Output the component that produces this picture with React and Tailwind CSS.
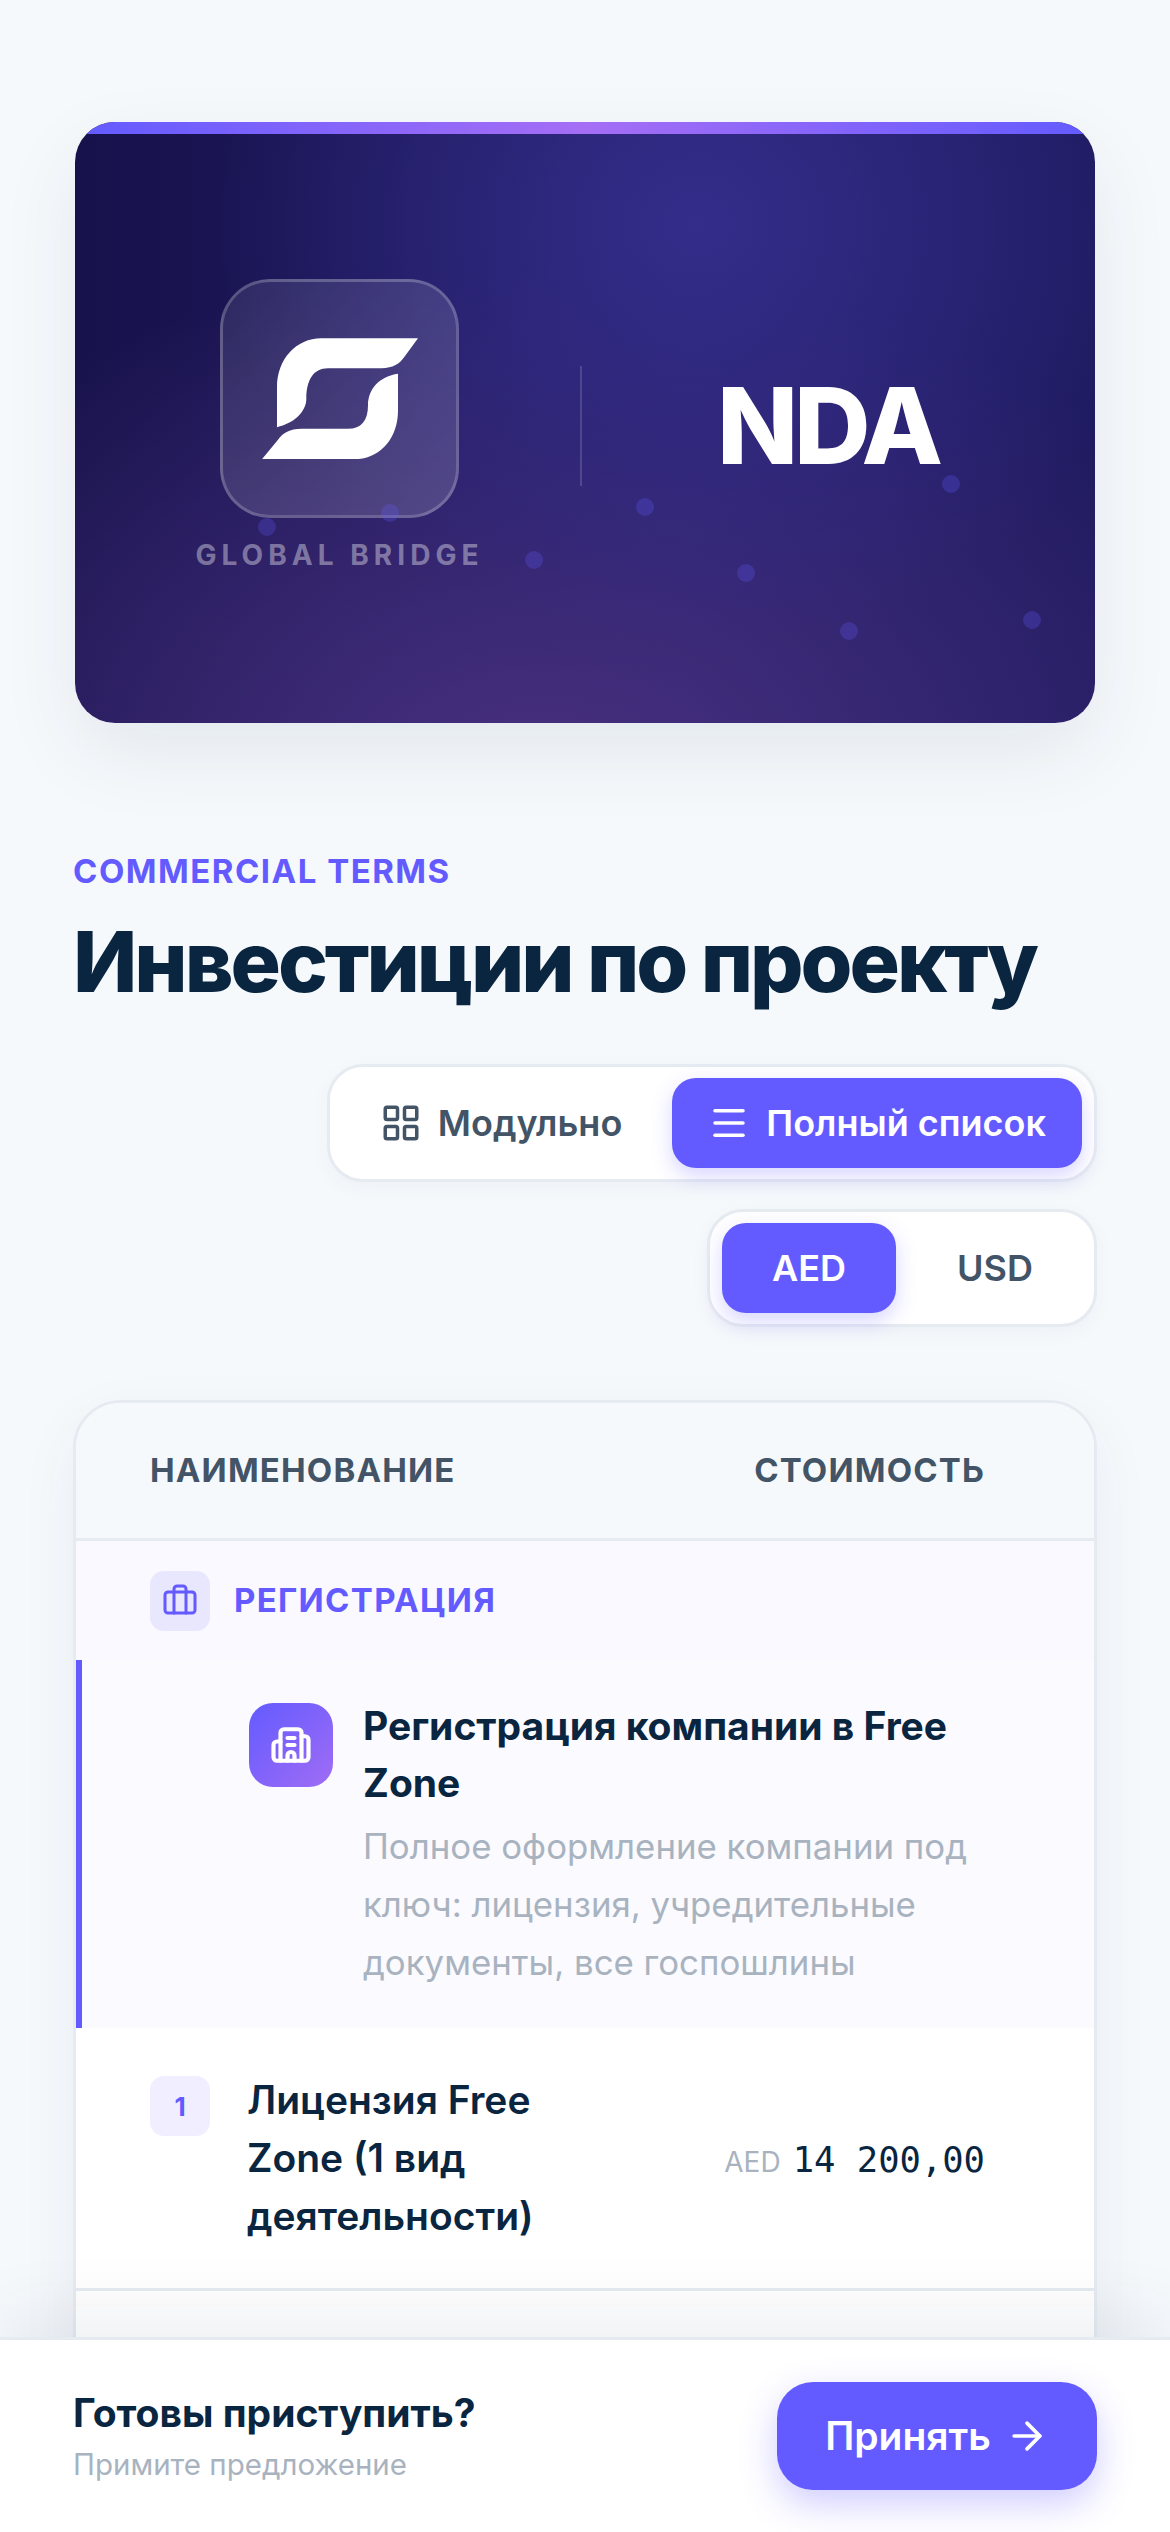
import React from "react";
import { LayoutGrid, Menu, ArrowRight, Briefcase, Building2 } from "lucide-react";

const dots = [
  "left-[183px] top-[396px]","left-[306px] top-[382px]","left-[450px] top-[429px]","left-[561px] top-[376px]",
  "left-[662px] top-[442px]","left-[765px] top-[500px]","left-[867px] top-[353px]","left-[948px] top-[489px]",
];

function Logo() {
  return (
    <svg viewBox="272 243 468 362" className="w-[156px] h-[121px]" fill="#fff">
      <path d="M740 243H450C375 243 317 305 317 390V510C365 500 405 465 405 425C405 370 425 333 470 333H630C665 333 685 320 700 298Z" />
      <path d="M680 350V460C680 545 625 606 550 606H272L320 548C335 527 355 515 390 515H530C570 515 590 490 590 445C590 395 625 358 680 350Z" />
    </svg>
  );
}

export default function App() {
  return (
    <div className="relative h-[2532px] overflow-hidden bg-[#f6f9fc] font-['Inter','Noto_Sans',sans-serif] text-[#0a2540]">
      <div className="px-[73px] pt-[122px]">
        <section className="relative h-[601px] mx-[2px] rounded-[40px] overflow-hidden shadow-[0_30px_80px_rgba(10,37,64,0.08)] bg-[radial-gradient(ellipse_480px_420px_at_61%_17%,#342d8a,transparent),radial-gradient(ellipse_800px_520px_at_45%_110%,#48307f,transparent),linear-gradient(90deg,#17124b,#231e69_60%,#1e1a5e)]">
          <div className="h-[12px] bg-[linear-gradient(90deg,#635bff,#a56ef5_50%,#635bff)]" />
          {dots.map((d) => (
            <span key={d} className={`absolute ${d} w-[18px] h-[18px] rounded-full bg-[#635bff]/25`} />
          ))}
          <div className="flex items-center pt-[145px]">
            <div className="flex flex-col items-center w-[505px] pl-[24px]">
              <div className="flex items-center justify-center w-[239px] h-[239px] rounded-[50px] border-[3px] border-white/20 bg-[linear-gradient(135deg,rgba(255,255,255,0.09),rgba(255,255,255,0.16))]">
                <Logo />
              </div>
              <div className="mt-[20px] text-[28px] leading-[34px] font-bold tracking-[0.18em] text-white/40">GLOBAL BRIDGE</div>
            </div>
            <div className="w-[2px] h-[120px] bg-white/15" />
            <div className="flex-1 pl-[135px] text-[106px] leading-[106px] font-extrabold tracking-[-0.04em] text-white">NDA</div>
          </div>
        </section>

        <div className="mt-[125px] text-[33px] leading-[46px] font-bold tracking-[0.045em] text-[#635bff]">COMMERCIAL TERMS</div>
        <h1 className="mt-[22px] text-[84px] leading-[92px] font-extrabold tracking-[-0.036em]">Инвестиции по проекту</h1>

        <div className="mt-[56px] flex flex-col items-end gap-[27px]">
          <div className="flex items-center h-[118px] p-[12px] pl-[0px] rounded-[36px] bg-white border-[3px] border-[#e6ebf1] shadow-[0_6px_20px_rgba(10,37,64,0.04)]">
            <button className="flex items-center gap-[16px] h-[90px] px-[50px] text-[36px] font-semibold text-[#425466]">
              <LayoutGrid className="w-[42px] h-[42px]" strokeWidth={2} />Модульно
            </button>
            <button className="flex items-center gap-[16px] h-[90px] px-[36px] rounded-[24px] bg-[#635bff] text-[36px] font-semibold text-white shadow-[0_8px_20px_rgba(99,91,255,0.25)]">
              <Menu className="w-[42px] h-[42px]" strokeWidth={2} />Полный список
            </button>
          </div>
          <div className="flex items-center gap-[12px] h-[118px] p-[12px] rounded-[36px] bg-white border-[3px] border-[#e6ebf1] shadow-[0_6px_20px_rgba(10,37,64,0.04)]">
            <button className="w-[174px] h-[90px] rounded-[24px] bg-[#635bff] text-[36px] font-semibold text-white shadow-[0_8px_20px_rgba(99,91,255,0.25)]">AED</button>
            <button className="w-[174px] h-[90px] text-[36px] font-semibold text-[#425466]">USD</button>
          </div>
        </div>

        <div className="mt-[73px] h-[1100px] rounded-[48px] border-[3px] border-[#e6ebf1] bg-white overflow-hidden shadow-[0_20px_60px_rgba(10,37,64,0.06)]">
          <div className="flex items-center justify-between h-[135px] pl-[74px] pr-[109px] bg-[#f6f9fc] text-[33px] font-bold tracking-[0.035em] text-[#425466]">
            <span>НАИМЕНОВАНИЕ</span>
            <span>СТОИМОСТЬ</span>
          </div>
          <div className="flex items-center gap-[24px] h-[122px] pl-[74px] border-t-[3px] border-[#e6ebf1] bg-[#f9f9ff]">
            <span className="flex items-center justify-center w-[60px] h-[60px] rounded-[14px] bg-[#e8e7fd] text-[#635bff]">
              <Briefcase className="w-[36px] h-[36px]" strokeWidth={2} />
            </span>
            <span className="text-[33px] font-bold tracking-[0.04em] text-[#635bff]">РЕГИСТРАЦИЯ</span>
          </div>
          <div className="flex gap-[30px] h-[368px] pl-[167px] pr-[90px] pt-[43px] border-l-[6px] border-[#635bff] bg-[#fafaff]">
            <span className="flex items-center justify-center shrink-0 w-[84px] h-[84px] rounded-[24px] bg-[linear-gradient(135deg,#635bff,#a06cf5)] text-white">
              <Building2 className="w-[42px] h-[42px]" strokeWidth={2.4} />
            </span>
            <div className="-mt-[6px]">
              <div className="text-[39px] leading-[57px] font-bold">Регистрация компании в Free Zone</div>
              <div className="mt-[6px] text-[34.8px] leading-[58px] text-[#a8b3bf]">Полное оформление компании под ключ: лицензия, учредительные документы, все госпошлины</div>
            </div>
          </div>
          <div className="flex items-center h-[263px] pl-[74px] pr-[109px] border-b-[3px] border-[#e6ebf1]">
            <span className="self-start mt-[48px] flex items-center justify-center shrink-0 w-[60px] h-[60px] rounded-[14px] bg-[#f1efff] text-[26px] font-bold text-[#635bff]">1</span>
            <div className="ml-[37px] w-[320px] text-[39px] leading-[58px] font-semibold">Лицензия Free Zone (1 вид деятельности)</div>
            <div className="ml-auto mt-[4px] flex items-baseline gap-[12px]">
              <span className="text-[28px] text-[#a8b3bf]">AED</span>
              <span className="font-['DejaVu_Sans_Mono',monospace] text-[35.5px]">14 200,00</span>
            </div>
          </div>
        </div>
      </div>

      <div className="absolute left-0 right-0 bottom-0 z-10 flex items-center justify-between h-[195px] pl-[73px] pr-[73px] bg-white border-t-[3px] border-[#e6ebf1] shadow-[0_-30px_60px_rgba(10,37,64,0.06)]">
        <div>
          <div className="text-[39px] leading-[50px] font-bold">Готовы приступить?</div>
          <div className="mt-[6px] text-[29.5px] leading-[40px] text-[#a8b3bf]">Примите предложение</div>
        </div>
        <button className="flex items-center justify-center gap-[14px] w-[320px] h-[108px] rounded-[36px] bg-[#635bff] text-[39px] font-semibold text-white shadow-[0_14px_36px_rgba(99,91,255,0.3)]">
          Принять<ArrowRight className="w-[44px] h-[44px]" strokeWidth={2} />
        </button>
      </div>
    </div>
  );
}
